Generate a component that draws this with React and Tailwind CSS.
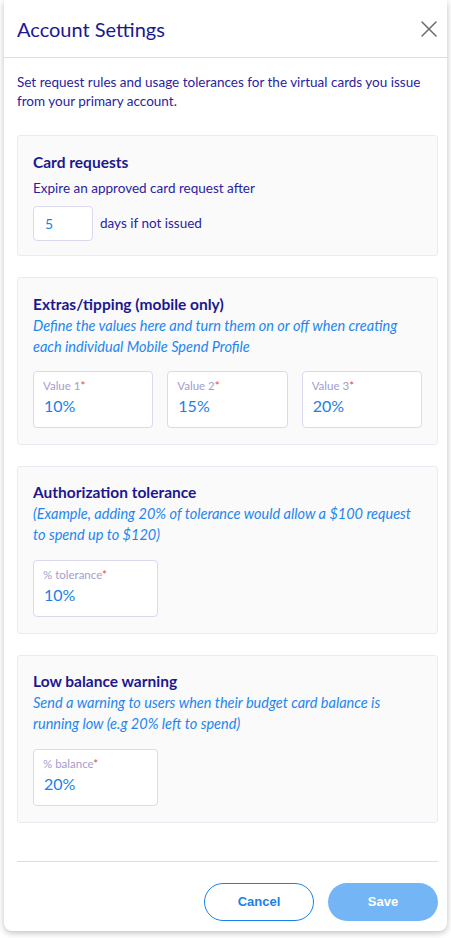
import React from "react";

const FONT = { fontFamily: "Lato, 'Open Sans', sans-serif" };

const Field = ({ label, value, className = "" }) => (
  <div className={`flex h-[57px] flex-col rounded-[4px] border border-[#dcd8f0] bg-white px-[9px] pt-[7px] ${className}`}>
    <div className="text-[11.5px] leading-[14px] text-[#a39dd0]">
      {label}
      <span className="text-[#ef4444]">*</span>
    </div>
    <div className="mt-[3px] pl-[1px] text-[16px] leading-[20px] text-[#1a7fe8]">{value}</div>
  </div>
);

const Section = ({ title, children, className = "" }) => (
  <div className={`mr-[9px] ml-[13px] rounded-[3px] border border-[#ebeaf3] bg-[#fafafb] px-[15px] ${className}`}>
    <div className="text-[15.5px] leading-[20px] font-bold text-[#1c178f]">{title}</div>
    {children}
  </div>
);

const Hint = ({ children }) => (
  <p className="mt-[1px] text-[14.5px] leading-[21px] text-[#1e86ef] italic">{children}</p>
);

export default function App() {
  return (
    <div className="h-[938px] w-full bg-white" style={FONT}>
      <div className="mx-[4px] flex h-[931px] flex-col rounded-b-[8px] bg-white shadow-[0_2px_6px_rgba(0,0,0,0.25)]">
        <div className="flex h-[58px] shrink-0 items-center justify-between border-b border-[#dedede] pr-[8px] pl-[13px]">
          <h1 className="text-[20px] font-normal text-[#1c178f]">Account Settings</h1>
          <svg width="20" height="20" viewBox="0 0 20 20" fill="none" stroke="#6b6b6b" strokeWidth="1.5" strokeLinecap="round">
            <path d="M3 3l14 14M17 3L3 17" />
          </svg>
        </div>

        <p className="mt-[15px] mr-[9px] ml-[13px] text-[13.5px] leading-[19px] text-[#2a22a0]">
          Set request rules and usage tolerances for the virtual cards you issue from your primary account.
        </p>

        <Section title="Card requests" className="mt-[24px] h-[121px] pt-[16px]">
          <p className="mt-[6px] text-[13.5px] leading-[20px] text-[#2a22a0]">Expire an approved card request after</p>
          <div className="mt-[8px] flex items-center gap-[7px]">
            <div className="flex h-[35px] w-[60px] items-center rounded-[4px] border border-[#dcd8f0] bg-white pl-[11px] text-[14px] text-[#1a7fe8]">5</div>
            <span className="text-[13.5px] text-[#2a22a0]">days if not issued</span>
          </div>
        </Section>

        <Section title="Extras/tipping (mobile only)" className="mt-[21px] h-[168px] pt-[16px]">
          <Hint>Define the values here and turn them on or off when creating each individual Mobile Spend Profile</Hint>
          <div className="mt-[14px] grid grid-cols-3 gap-[14px]">
            <Field label="Value 1" value="10%" />
            <Field label="Value 2" value="15%" />
            <Field label="Value 3" value="20%" />
          </div>
        </Section>

        <Section title="Authorization tolerance" className="mt-[21px] h-[168px] pt-[15px]">
          <Hint>(Example, adding 20% of tolerance would allow a $100 request to spend up to $120)</Hint>
          <Field label="% tolerance" value="10%" className="mt-[15px] w-[125px]" />
        </Section>

        <Section title="Low balance warning" className="mt-[21px] h-[168px] pt-[15px]">
          <Hint>Send a warning to users when their budget card balance is running low (e.g 20% left to spend)</Hint>
          <Field label="% balance" value="20%" className="mt-[15px] w-[125px]" />
        </Section>

        <div className="mt-[38px] mr-[9px] ml-[13px] border-t border-[#dedede]" />

        <div className="mt-[21px] mr-[9px] flex justify-end gap-[14px]" style={{ fontFamily: "'Liberation Sans', Arial, sans-serif" }}>
          <button className="h-[38px] w-[110px] rounded-full border border-[#1a7fe8] bg-white text-[13px] font-bold text-[#1a7fe8]">Cancel</button>
          <button className="h-[38px] w-[110px] rounded-full bg-[#74b5f6] text-[13px] font-bold text-white">Save</button>
        </div>
      </div>
    </div>
  );
}
